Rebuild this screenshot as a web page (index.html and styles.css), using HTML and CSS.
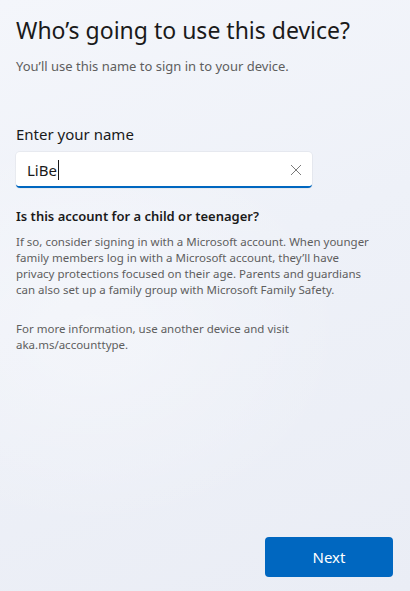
FILE: index.html
```html
<!DOCTYPE html>
<html lang="en">

<head>
    <meta charset="UTF-8">
    <meta name="viewport" content="width=device-width, initial-scale=1.0">
    <title>Who's going to use this device?</title>
    <link rel="stylesheet" href="styles.css">
</head>

<body>
    <div class="page">
        <main class="content">
            <h1>Who’s going to use this device?</h1>
            <p class="subtitle">You’ll use this name to sign in to your device.</p>

            <label class="field-label" for="name">Enter your name</label>
            <div class="field">
                <span class="value" id="name" role="textbox">LiBe</span>
                <button class="clear" aria-label="Clear">
                    <svg width="12" height="12" viewBox="0 0 12 12">
                        <path d="M1 1L11 11M11 1L1 11" stroke="#7a7a7a" stroke-width="1" fill="none" />
                    </svg>
                </button>
            </div>

            <h2>Is this account for a child or teenager?</h2>
            <p class="info">If so, consider signing in with a Microsoft account. When younger family members log in with a Microsoft account, they’ll have privacy protections focused on their age. Parents and guardians can also set up a family group with Microsoft Family Safety.</p>
            <p class="info more">For more information, use another device and visit aka.ms/accounttype.</p>
        </main>
        <footer class="actions">
            <button class="primary">Next</button>
        </footer>
    </div>
</body>

</html>
```

FILE: styles.css
```css
:root {
    --text: #1a1a1a;
    --muted: #5e5e5e;
    --accent: #0067c0;
    --field: #ffffff;
}

* {
    box-sizing: border-box;
}

html,
body {
    margin: 0;
    height: 100%;
}

body {
    background:
        radial-gradient(ellipse 260px 200px at 90px 330px, rgba(255, 255, 255, 0.35), transparent),
        linear-gradient(160deg, #f4f6fb 0%, #eef1f8 45%, #eaedf5 100%);
    color: var(--text);
    font-family: "Noto Sans", "Open Sans", sans-serif;
}

.page {
    display: flex;
    flex-direction: column;
    height: 100%;
    padding: 0 17px 14px 16px;
}

.content {
    flex: 1;
}

h1 {
    margin: 14px 0 0;
    font-size: 23px;
    font-weight: 400;
    line-height: 32px;
}

.subtitle {
    margin: 11px 0 0;
    font-size: 13px;
    line-height: 18px;
    color: var(--muted);
}

.field-label {
    display: block;
    margin-top: 49px;
    font-size: 15px;
    line-height: 20px;
}

.field {
    display: flex;
    align-items: center;
    width: 296px;
    height: 36px;
    margin-top: 8px;
    padding: 2px 0 0 11px;
    background-color: var(--field);
    border-radius: 4px;
    border-bottom: 2px solid var(--accent);
    box-shadow: 0 0 0 1px rgba(0, 0, 0, 0.04);
}

.value {
    font-size: 15px;
    line-height: 20px;
    padding-right: 1px;
    border-right: 1px solid var(--text);
}

.clear {
    margin-left: auto;
    margin-right: 10px;
    border: none;
    background: none;
    padding: 0;
    display: flex;
}

h2 {
    margin: 19px 0 0;
    font-size: 13px;
    font-weight: 600;
    line-height: 18px;
}

.info {
    max-width: 360px;
    margin: 9px 0 0;
    font-size: 11.5px;
    line-height: 16px;
    color: var(--muted);
}

.info.more {
    margin-top: 23px;
}

.actions {
    display: flex;
    justify-content: flex-end;
}

.primary {
    width: 128px;
    height: 40px;
    border: none;
    border-radius: 4px;
    background-color: var(--accent);
    color: #ffffff;
    font-family: inherit;
    font-size: 15px;
}
```
